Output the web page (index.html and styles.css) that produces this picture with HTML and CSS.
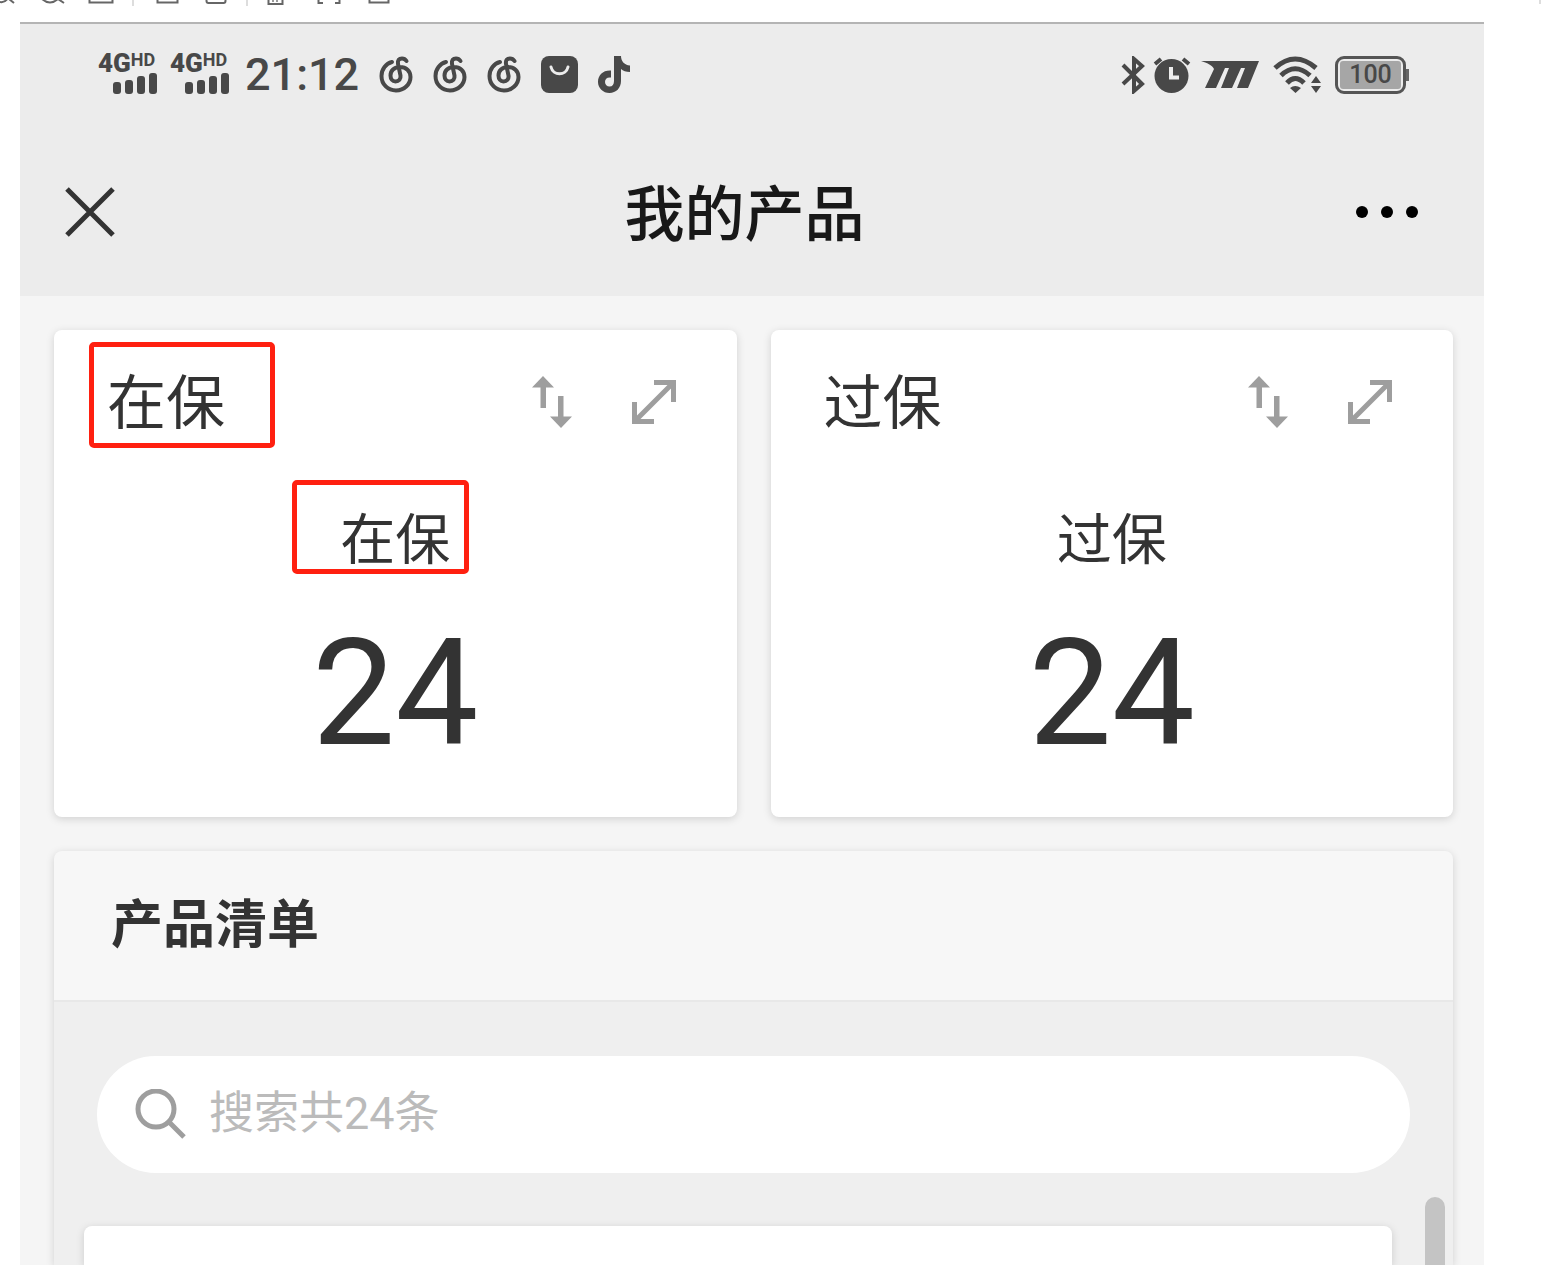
FILE: index.html
```
<!DOCTYPE html>
<html lang="zh-CN">
<head>
  <meta charset="UTF-8">
  <meta name="viewport" content="width=device-width, initial-scale=1.0">
  <title>我的产品</title>
  <link rel="stylesheet" href="styles.css">
</head>
<body>

  <!-- Icon shapes used more than once -->
  <svg class="defs" aria-hidden="true">
    <symbol id="signal" viewBox="0 0 46 22">
      <rect x="1" y="9" width="8" height="12" rx="3"/>
      <rect x="13" y="7" width="8" height="14" rx="3"/>
      <rect x="25" y="3" width="8" height="18" rx="3"/>
      <rect x="37" y="0" width="8" height="21" rx="3"/>
    </symbol>
    <symbol id="music" viewBox="0 0 34 38">
      <path d="M13 6C7 7.500 2.500 13 2.500 20C2.500 28.500 9 34.500 17 34.500S31.500 28.500 31.500 21C31.500 15 27 11 21 11C15 11 11.500 15 11.500 19.500C11.500 23 13.500 25.500 16.500 25.500C20 25.500 22 23 21.500 19.500L19 8C18.500 4 20 2.500 23 2.500C25 2.500 26.500 3.500 27.500 5"/>
    </symbol>
    <symbol id="sort" viewBox="0 0 40 52">
      <path d="M11 0L22 11.500H14V32H8.500V11.500H0ZM26 20H31.500V40.500H40L29 52L18 40.500H26Z"/>
    </symbol>
    <symbol id="expand" viewBox="0 0 44 44">
      <path d="M22 2.500H41.500V22M2.500 22V41.500H22M3 41L41 3"/>
    </symbol>
  </svg>

  <!-- Toolbar -->
  <div class="toolbar">
    <svg width="400" height="8" viewBox="0 0 400 8" aria-hidden="true">
      <path d="M0 2Q5 3 8 -2M9 -1L14 3M42 -1Q50 6 58 -1M58 -1L64 3M89.500 -1V2.500H112.500V-1M157.500 -1V2.500H177.500V-1M206.500 -1V1Q206.500 3 208.500 3H223.500Q225.500 3 225.500 1V-1M268.500 -1V4H282.500V-1M318.500 -1V3H323M335 3H339.500V-1M369.500 -1V2.500H388.500V-1"/>
      <path class="light" d="M133 0V6M247 0V6"/>
      <path class="dots" d="M272 1H280"/>
    </svg>
    <span class="toolbar-end"></span>
  </div>

  <div class="phone">
    <div class="top">
      <!-- Status Bar -->
      <div class="status">
        <div class="status-left">
          <div class="network">
            <div class="network-label">4G<span>HD</span></div>
            <svg width="46" height="22"><use href="#signal"/></svg>
          </div>
          <div class="network">
            <div class="network-label">4G<span>HD</span></div>
            <svg width="46" height="22"><use href="#signal"/></svg>
          </div>
          <div class="time">21:12</div>
          <div class="apps">
            <svg class="music" width="34" height="38"><use href="#music"/></svg>
            <svg class="music" width="34" height="38"><use href="#music"/></svg>
            <svg class="music" width="34" height="38"><use href="#music"/></svg>
            <svg width="37" height="38" viewBox="0 0 37 38">
              <rect width="37" height="37" rx="8"/>
              <path class="smile" d="M10 11C12 20 25 20 27 11"/>
            </svg>
            <svg width="32" height="38" viewBox="0 0 32 38">
              <path d="M16 0H23C23 5 26 9 32 9.500V16C28 16 25 15 23 13V25C23 32 18 37 11.500 37C5 37 0 32 0 26C0 19 5 14 13 14.500V21.500C9 21 7 23 7 26C7 28.500 9 30.500 11.500 30.500C14.500 30.500 16 28.500 16 25Z"/>
            </svg>
          </div>
        </div>
        <div class="status-right">
          <svg class="bluetooth" width="24" height="38" viewBox="0 0 24 38">
            <path d="M2 9L21 28L13 35V3L21 10L2 28"/>
          </svg>
          <svg class="alarm" width="38" height="38" viewBox="0 0 38 38">
            <circle cx="18.500" cy="20" r="17"/>
            <path class="bells" d="M2 8L8 3M30 3L36 8"/>
            <path class="hands" d="M18 11V21.500H26"/>
          </svg>
          <svg class="m-logo" width="58" height="28" viewBox="0 0 58 28">
            <path d="M0 0H58L47 27H36L44 7H40L31 27H20L28 7H24L15 27H4L13 8C11 4 6 2 0 0Z"/>
          </svg>
          <svg class="wifi" width="48" height="38" viewBox="0 0 48 38">
            <path class="waves" d="M2 12Q22 -6 43 12M8 19.500Q22 6 37 19.500M14 27Q22 18 31 27"/>
            <path d="M17 32Q22 28 28 32L22.500 37ZM43 20L48 27H38ZM43 37L48 30H38Z"/>
          </svg>
          <div class="battery"><span>100</span></div>
        </div>
      </div>

      <!-- Page Title -->
      <div class="nav">
        <button class="nav-button" aria-label="关闭">
          <svg class="close" width="52" height="52" viewBox="0 0 52 52"><path d="M3 3L49 49M49 3L3 49"/></svg>
        </button>
        <h1>我的产品</h1>
        <button class="nav-button" aria-label="更多">
          <svg width="64" height="14" viewBox="0 0 64 14">
            <circle cx="7" cy="7" r="6"/>
            <circle cx="32" cy="7" r="6"/>
            <circle cx="57" cy="7" r="6"/>
          </svg>
        </button>
      </div>
    </div>

    <div class="content">
      <!-- Count Cards -->
      <div class="cards">
        <div class="card">
          <div class="card-head">
            <h2><span class="marked marked-title">在保</span></h2>
            <button class="icon-button" aria-label="排序"><svg class="sort" width="40" height="52"><use href="#sort"/></svg></button>
            <button class="icon-button" aria-label="展开"><svg class="expand" width="44" height="44"><use href="#expand"/></svg></button>
          </div>
          <div class="card-label"><span class="marked marked-label">在保</span></div>
          <div class="card-value">24</div>
        </div>
        <div class="card">
          <div class="card-head">
            <h2>过保</h2>
            <button class="icon-button" aria-label="排序"><svg class="sort" width="40" height="52"><use href="#sort"/></svg></button>
            <button class="icon-button" aria-label="展开"><svg class="expand" width="44" height="44"><use href="#expand"/></svg></button>
          </div>
          <div class="card-label">过保</div>
          <div class="card-value">24</div>
        </div>
      </div>

      <!-- Product List -->
      <div class="list">
        <h2 class="list-title">产品清单</h2>
        <div class="list-body">
          <div class="list-main">
            <label class="search">
              <svg width="52" height="52" viewBox="0 0 52 52"><circle cx="21" cy="20" r="18"/><path d="M34 33L49 48"/></svg>
              <input type="search" placeholder="搜索共24条" aria-label="搜索">
            </label>
            <div class="item"></div>
          </div>
          <div class="scrollbar"></div>
        </div>
      </div>
    </div>
  </div>

</body>
</html>
```

FILE: styles.css
```
* {
  box-sizing: border-box;
}

body {
  margin: 0;
  height: 100vh;
  display: flex;
  flex-direction: column;
  overflow: hidden;
  background-color: #fff;
  color: #333;
  font-family: Roboto, "Noto Sans CJK SC", sans-serif;
}

h1, h2 {
  margin: 0;
  font-weight: 400;
}

button {
  display: flex;
  padding: 0;
  border: none;
  background: none;
  cursor: pointer;
}

svg {
  display: block;
  flex-shrink: 0;
}

.defs {
  position: absolute;
  width: 0;
  height: 0;
}

.toolbar {
  height: 22px;
  padding-right: 3px;
  flex-shrink: 0;
  display: flex;
  justify-content: space-between;
}

.toolbar path {
  fill: none;
  stroke: #666;
  stroke-width: 2;
}

.toolbar .light {
  stroke: #ddd;
}

.toolbar .dots {
  stroke: #999;
  stroke-dasharray: 2 2;
}

.toolbar-end {
  width: 2px;
  height: 4px;
  background-color: #ddd;
}

.phone {
  flex: 1;
  min-height: 0;
  margin: 0 60px 0 20px;
  display: flex;
  flex-direction: column;
  background-color: #f5f5f5;
}

.top {
  border-top: 2px solid #b4b4b4;
  background-color: #ececec;
}

/* Status bar */
.status {
  height: 104px;
  padding: 0 75px 2px 78px;
  display: flex;
  align-items: center;
  justify-content: space-between;
  color: #484848;
  fill: #484848;
}

.status-left, .status-right, .apps {
  display: flex;
  align-items: center;
}

.network {
  width: 60px;
  height: 44px;
  margin-right: 12px;
  display: flex;
  flex-direction: column;
  align-items: flex-end;
}

.network-label {
  width: 60px;
  display: flex;
  font-size: 26px;
  line-height: 20px;
  font-weight: 900;
}

.network-label span {
  font-size: 18px;
  line-height: 14px;
  font-weight: 700;
}

.time {
  margin: 0 20px 0 3px;
  font-size: 45px;
  line-height: 52px;
  font-weight: 500;
}

.apps {
  gap: 20px;
}

.music {
  fill: none;
  stroke: #484848;
  stroke-width: 4;
  stroke-linecap: round;
}

.smile {
  fill: none;
  stroke: #ececec;
  stroke-width: 3;
  stroke-linecap: round;
}

.status-right {
  gap: 8px;
}

.bluetooth, .bells, .waves {
  fill: none;
  stroke: #484848;
  stroke-width: 4;
}

.waves {
  stroke-width: 5;
}

.hands {
  fill: none;
  stroke: #ececec;
  stroke-width: 4;
}

.m-logo {
  margin: 0 6px 0 2px;
}

.battery {
  position: relative;
  width: 71px;
  height: 38px;
  margin: 0 3px 0 6px;
  padding: 2px;
  border: 3px solid #555;
  border-radius: 9px;
}

.battery span {
  display: block;
  border-radius: 3px;
  background-color: #a6a6a6;
  font-size: 25px;
  line-height: 28px;
  font-weight: 500;
  text-align: center;
}

.battery::after {
  content: "";
  position: absolute;
  top: 10px;
  right: -6px;
  width: 3px;
  height: 12px;
  background-color: #666;
}

/* Title bar */
.nav {
  height: 168px;
  padding: 0 65px 0 44px;
  display: flex;
  align-items: center;
  justify-content: space-between;
}

.nav h1 {
  padding: 8px 0 0 18px;
  color: #181818;
  font-size: 60px;
  line-height: 80px;
  font-weight: 500;
}

.close {
  stroke: #333;
  stroke-width: 5;
}

/* Cards */
.content {
  flex: 1;
  min-height: 0;
  padding: 34px 31px 0 34px;
  display: flex;
  flex-direction: column;
  gap: 34px;
}

.cards {
  display: grid;
  grid-template-columns: 1fr 1fr;
  gap: 34px;
}

.card {
  height: 487px;
  border-radius: 8px;
  background-color: #fff;
  box-shadow: 0 2px 8px rgba(0, 0, 0, 0.15);
}

.card-head {
  height: 144px;
  padding: 0 61px 0 53px;
  display: flex;
  align-items: center;
  gap: 60px;
}

.card-head h2 {
  flex: 1;
  padding-top: 4px;
  font-size: 59px;
  line-height: 80px;
}

.card-label {
  font-size: 55px;
  line-height: 132px;
  text-align: center;
}

.card-value {
  font-size: 148px;
  line-height: 176px;
  text-align: center;
}

.sort {
  fill: #9e9e9e;
}

.expand {
  fill: none;
  stroke: #9e9e9e;
  stroke-width: 5;
}

/* Red frames drawn over the text */
.marked {
  position: relative;
  display: inline-block;
}

.marked::after {
  content: "";
  position: absolute;
  border: 5px solid #ff2010;
  border-radius: 5px;
}

.marked-title::after {
  inset: -22px -50px -4px -18px;
}

.marked-label::after {
  inset: 6px -19px 32px -48px;
}

/* List */
.list {
  flex: 1;
  min-height: 0;
  display: flex;
  flex-direction: column;
  border-radius: 8px 8px 0 0;
  background-color: #f7f7f7;
  box-shadow: 0 2px 8px rgba(0, 0, 0, 0.15);
}

.list-title {
  padding: 0 57px;
  border-bottom: 2px solid #e8e8e8;
  font-size: 52px;
  line-height: 149px;
  font-weight: 700;
}

.list-body {
  flex: 1;
  min-height: 0;
  padding: 54px 8px 0 30px;
  display: flex;
  gap: 33px;
  overflow: hidden;
  background-color: #efefef;
}

.list-main {
  flex: 1;
  display: flex;
  flex-direction: column;
  gap: 53px;
}

.search {
  height: 117px;
  margin: 0 -18px 0 13px;
  padding: 0 38px;
  display: flex;
  align-items: center;
  gap: 22px;
  border-radius: 59px;
  background-color: #fff;
}

.search svg {
  fill: none;
  stroke: #9e9e9e;
  stroke-width: 5;
}

.search input {
  flex: 1;
  min-width: 0;
  padding: 0 0 2px;
  border: none;
  outline: none;
  background: none;
  font-family: inherit;
  font-size: 45px;
  line-height: 64px;
  color: #333;
}

.search input::placeholder {
  color: #bbb;
}

.item {
  flex: 1;
  border-radius: 8px 8px 0 0;
  background-color: #fff;
  box-shadow: 0 2px 8px rgba(0, 0, 0, 0.15);
}

.scrollbar {
  width: 20px;
  margin-top: 141px;
  border-radius: 10px 10px 0 0;
  background-color: #c4c4c4;
}
```
